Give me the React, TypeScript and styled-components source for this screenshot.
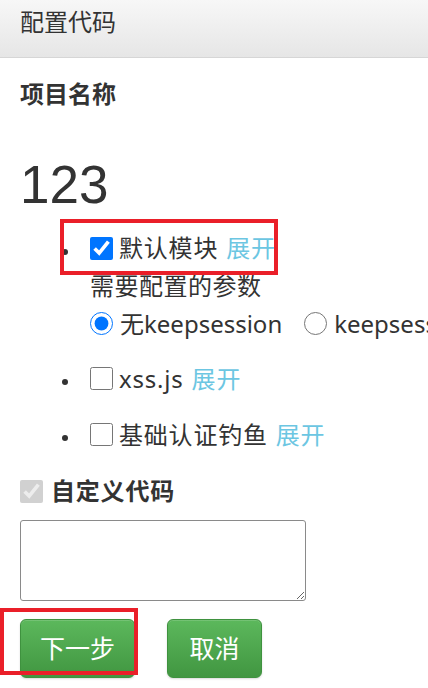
import React from "react";
import styled, { createGlobalStyle } from "styled-components";

const GlobalStyle = createGlobalStyle`
  html, body {
    margin: 0;
    padding: 0;
    background: #ffffff;
    overflow: hidden;
  }
  body {
    font-family: "Noto Sans", "Noto Sans CJK SC", sans-serif;
    color: #333333;
  }
  * { box-sizing: border-box; }
`;

const Page = styled.div`
  position: relative;
  width: 428px;
  min-height: 688px;
  overflow: hidden;
`;

const Header = styled.div`
  height: 58px;
  padding: 5px 0 0 20px;
  background: linear-gradient(to bottom, #f7f7f7, #e6e6e6);
  border-bottom: 1px solid #d6d6d6;
`;

const HeaderTitle = styled.div`
  font-size: 24px;
  line-height: 34px;
  color: #333333;
`;

const Form = styled.div`
  display: flex;
  flex-direction: column;
  align-items: flex-start;
  padding-left: 20px;
`;

const FieldLabel = styled.div`
  margin-top: 19px;
  font-size: 24px;
  line-height: 34px;
  font-weight: 700;
`;

const ProjectName = styled.div`
  margin-top: 44px;
  font-family: "Liberation Sans", Arial, sans-serif;
  font-size: 53px;
  line-height: 59.4px;
  color: #333333;
`;

const ModuleList = styled.ul`
  list-style: none;
  margin: 16px 0 0 0;
  padding: 0;
  display: flex;
  flex-direction: column;
  gap: 20px;
`;

const ModuleItem = styled.li`
  display: flex;
  align-items: flex-start;
  margin-left: -20px;
`;

const BulletCol = styled.div`
  width: 90px;
  height: 36px;
  flex: none;
  display: flex;
  align-items: center;
  justify-content: flex-end;
  padding-right: 22px;
`;

const Dot = styled.span`
  width: 6px;
  height: 6px;
  border-radius: 50%;
  background: #333333;
  margin-top: 7px;
`;

const ItemBody = styled.div`
  display: flex;
  flex-direction: column;
  white-space: nowrap;
`;

const Line = styled.label<{ $h?: number; $mt?: number }>`
  display: flex;
  align-items: center;
  height: ${(p) => p.$h ?? 36}px;
  margin-top: ${(p) => p.$mt ?? 0}px;
  font-size: 24px;
  line-height: 34px;
  white-space: nowrap;
`;

const Check = styled.input.attrs({ type: "checkbox" })<{ $gap?: number }>`
  width: 23px;
  height: 23px;
  margin: 0 ${(p) => p.$gap ?? 6}px 0 0;
  flex: none;
`;

const Radio = styled.input.attrs({ type: "radio" })<{ $lead?: number }>`
  width: 23px;
  height: 23px;
  margin: 0 7px 0 ${(p) => p.$lead ?? 0}px;
  flex: none;
`;

const ItemText = styled.span<{ $bold?: boolean }>`
  font-weight: ${(p) => (p.$bold ? 700 : 400)};
  letter-spacing: 0.8px;
`;

const Expand = styled.a`
  margin-left: 8px;
  color: #6cc6e2;
  text-decoration: none;
  letter-spacing: 0.8px;
  cursor: pointer;
`;

const Params = styled.div`
  margin-top: 2.5px;
  font-size: 24px;
  line-height: 34px;
  letter-spacing: 0.5px;
`;

const CodeArea = styled.textarea`
  margin-top: 10.5px;
  width: 286px;
  height: 81px;
  border: 1px solid #8a8a8a;
  border-radius: 3px;
  font-family: "Liberation Mono", monospace;
  font-size: 14px;
`;

const Actions = styled.div`
  margin-top: 18px;
  display: flex;
  gap: 32px;
`;

const Button = styled.button<{ $w: number }>`
  width: ${(p) => p.$w}px;
  height: 59px;
  padding: 0;
  border: 1px solid #3f923f;
  border-radius: 6px;
  background: linear-gradient(to bottom, #5cb85c, #419641);
  box-shadow: inset 0 1px 0 rgba(255, 255, 255, 0.15), 0 1px 2px rgba(0, 0, 0, 0.15);
  color: #ffffff;
  font-family: "Noto Sans", "Noto Sans CJK SC", sans-serif;
  font-size: 25px;
  line-height: 34px;
  cursor: pointer;
`;

const Highlight = styled.div<{ $l: number; $t: number; $w: number; $h: number }>`
  position: absolute;
  left: ${(p) => p.$l}px;
  top: ${(p) => p.$t}px;
  width: ${(p) => p.$w}px;
  height: ${(p) => p.$h}px;
  border: 4px solid #ea1f29;
  pointer-events: none;
`;

export default function App() {
  return (
    <Page>
      <GlobalStyle />
      <Header>
        <HeaderTitle>配置代码</HeaderTitle>
      </Header>
      <Form>
        <FieldLabel>项目名称</FieldLabel>
        <ProjectName>123</ProjectName>
        <ModuleList>
          <ModuleItem>
            <BulletCol>
              <Dot />
            </BulletCol>
            <ItemBody>
              <Line>
                <Check defaultChecked />
                <ItemText>默认模块</ItemText>
                <Expand>展开</Expand>
              </Line>
              <Params>需要配置的参数</Params>
              <Line $h={34} $mt={4}>
                <Radio name="ks" defaultChecked />
                <span>无keepsession</span>
                <Radio name="ks" $lead={22} />
                <span>keepsession</span>
              </Line>
            </ItemBody>
          </ModuleItem>
          <ModuleItem>
            <BulletCol>
              <Dot />
            </BulletCol>
            <ItemBody>
              <Line>
                <Check />
                <ItemText>xss.js</ItemText>
                <Expand>展开</Expand>
              </Line>
            </ItemBody>
          </ModuleItem>
          <ModuleItem>
            <BulletCol>
              <Dot />
            </BulletCol>
            <ItemBody>
              <Line>
                <Check />
                <ItemText>基础认证钓鱼</ItemText>
                <Expand>展开</Expand>
              </Line>
            </ItemBody>
          </ModuleItem>
        </ModuleList>
        <Line $mt={20.5}>
          <Check defaultChecked disabled $gap={8} />
          <ItemText $bold>自定义代码</ItemText>
        </Line>
        <CodeArea />
        <Actions>
          <Button $w={115}>下一步</Button>
          <Button $w={95}>取消</Button>
        </Actions>
      </Form>
      <Highlight $l={60} $t={219} $w={218} $h={56} />
      <Highlight $l={0} $t={608} $w={138} $h={67} />
    </Page>
  );
}
